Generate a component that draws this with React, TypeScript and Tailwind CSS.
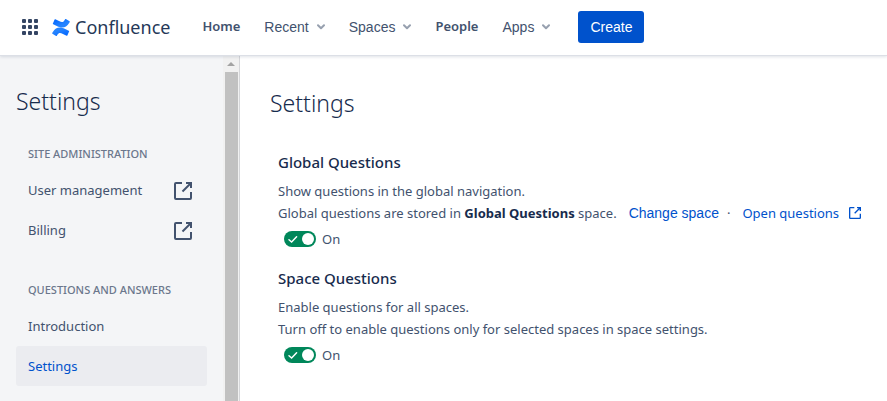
import { useState } from "react";

const sans = "font-['Noto_Sans','Open_Sans',sans-serif]";
const arial = "font-['Liberation_Sans',Arial,sans-serif]";

function AppSwitcherIcon() {
  return (
    <svg viewBox="0 0 16 16" className="size-4" fill="currentColor" aria-hidden="true">
      {[0, 6, 12].map((y) =>
        [0, 6, 12].map((x) => <rect key={`${x}-${y}`} x={x} y={y} width="4" height="4" rx="1" />),
      )}
    </svg>
  );
}

function ConfluenceMark() {
  return (
    <svg viewBox="0 0 256 246" className="h-[17px] w-[18px]" aria-hidden="true">
      <defs>
        <linearGradient id="lower" x1="99%" y1="113%" x2="34%" y2="38%">
          <stop offset="18%" stopColor="#0065FF" />
          <stop offset="100%" stopColor="#2684FF" />
        </linearGradient>
        <linearGradient id="upper" x1="1%" y1="-13%" x2="66%" y2="61%">
          <stop offset="18%" stopColor="#0065FF" />
          <stop offset="100%" stopColor="#2684FF" />
        </linearGradient>
      </defs>
      <path
        fill="url(#lower)"
        d="M9.3 187.9c-2.7 4.3-5.6 9.3-8.1 13.3a8.1 8.1 0 0 0 2.7 11l53 32.700a8.100 8.100 0 0 0 11.300-2.700c2.100-3.600 4.900-8.200 7.900-13.200 21-34.600 42.100-30.400 80.100-12.200l52.600 25a8.100 8.100 0 0 0 10.900-4.100l25.300-57.100a8.100 8.100 0 0 0-4.100-10.600c-11.100-5.200-33.200-15.600-53.100-25.200C116.200 110.100 55.500 112.800 9.300 187.900z"
      />
      <path
        fill="url(#upper)"
        d="M246.100 58.200c2.700-4.300 5.600-9.300 8.100-13.300a8.100 8.100 0 0 0-2.700-11L198.500 1.200a8.100 8.100 0 0 0-11.500 2.700c-2.100 3.600-4.900 8.200-7.900 13.200-21 34.600-42.100 30.400-80.100 12.200L46.600 4.400a8.100 8.100 0 0 0-10.900 4.100L10.400 65.700a8.100 8.100 0 0 0 4.100 10.600c11.100 5.200 33.200 15.600 53.100 25.200 71.700 34.700 132.400 31.900 178.500-43.300z"
      />
    </svg>
  );
}

function ChevronIcon() {
  return (
    <svg viewBox="0 0 8 6" className="h-[6px] w-2 text-[#97A0AF]" fill="none" stroke="currentColor" strokeWidth="2" strokeLinecap="round" strokeLinejoin="round" aria-hidden="true">
      <path d="M1 1.200 4 4.200 7 1.200" />
    </svg>
  );
}

function ShortcutIcon({ className }: { className: string }) {
  return (
    <svg viewBox="0 0 18 18" className={className} fill="none" stroke="currentColor" strokeWidth="2" aria-hidden="true">
      <path d="M8 1H2a1 1 0 0 0-1 1v14a1 1 0 0 0 1 1h14a1 1 0 0 0 1-1v-6" />
      <path d="M8.500 9.500 16 2" />
      <path d="M12 1h5v5" />
      <path d="M14 1h3v3z" fill="currentColor" strokeWidth="1" />
    </svg>
  );
}

function NavMenu({ label }: { label: string }) {
  return (
    <button type="button" className={`flex items-center gap-2 text-sm text-[#42526E] ${arial}`}>
      {label}
      <ChevronIcon />
    </button>
  );
}

function SideLink({ label, external, active }: { label: string; external?: boolean; active?: boolean }) {
  return (
    <a
      href="#"
      aria-current={active ? "page" : undefined}
      className={`flex h-10 items-center justify-between rounded-[3px] pt-px pr-[15px] pl-3 text-[13px] ${active ? "bg-[#EBECF0] text-[#0052CC]" : "text-[#42526E]"}`}
    >
      {label}
      {external && <ShortcutIcon className="size-[18px]" />}
    </a>
  );
}

function Toggle({ id }: { id: string }) {
  const [on, setOn] = useState(true);
  return (
    <label htmlFor={id} className="mt-[6px] ml-[6px] flex h-[18px] w-fit items-center gap-[6px]">
      <input id={id} type="checkbox" role="switch" checked={on} onChange={() => setOn(!on)} className="peer sr-only" />
      <span className={`flex h-4 w-8 items-center rounded-full px-[2px] ${on ? "justify-between bg-[#00875A]" : "bg-[#6B778C]"}`}>
        {on && (
          <svg viewBox="0 0 12 12" className="ml-px size-3 text-white" fill="none" stroke="currentColor" strokeWidth="1.500" strokeLinecap="round" aria-hidden="true">
            <path d="M2 6.800 4.600 9 9.600 3.800" />
          </svg>
        )}
        <span className="size-3 rounded-full bg-white" />
      </span>
      {on ? "On" : "Off"}
    </label>
  );
}

export default function App() {
  return (
    <div className={`flex min-h-screen flex-col bg-white text-[13px] text-[#172B4D] ${sans}`}>
      <header className="z-10 flex h-14 items-center border-b border-[#DCDFE6] bg-white pb-px pl-[22px] shadow-[0_1px_3px_rgba(9,30,66,0.13)]">
        <button type="button" aria-label="Switch to" className="text-[#344563]">
          <AppSwitcherIcon />
        </button>
        <a href="#" className="ml-[14px] flex items-center gap-[5px] text-lg leading-6 text-[#253858]">
          <ConfluenceMark />
          Confluence
        </a>
        <nav className="ml-8 flex items-center gap-6">
          <a href="#" className="text-[13px] font-semibold text-[#42526E]">Home</a>
          <NavMenu label="Recent" />
          <NavMenu label="Spaces" />
          <a href="#" className="text-[13px] font-semibold text-[#42526E]">People</a>
          <NavMenu label="Apps" />
        </nav>
        <button type="button" className={`ml-7 h-8 rounded-[3px] bg-[#0052CC] px-3 text-sm text-white ${arial}`}>
          Create
        </button>
      </header>

      <div className="flex flex-1">
        <aside className="flex w-60 shrink-0 bg-[#F4F5F7]">
          <nav className="flex-1 px-4 pt-[31px] pb-[15px]">
            <h2 className="text-[23px] leading-7 font-light text-[#172B4D]">Settings</h2>
            <h3 className="mt-[31px] mb-2 pl-3 text-[11px] leading-4 font-medium text-[#6B778C]">SITE ADMINISTRATION</h3>
            <SideLink label="User management" external />
            <SideLink label="Billing" external />
            <h3 className="mt-8 mb-2 pl-3 text-[11px] leading-4 font-medium text-[#6B778C]">QUESTIONS AND ANSWERS</h3>
            <SideLink label="Introduction" />
            <SideLink label="Settings" active />
          </nav>
          <div className="flex w-[17px] flex-col items-center border-r border-[#D5D6D9] bg-[#F1F1F1]" aria-hidden="true">
            <svg viewBox="0 0 16 16" className="size-4 shrink-0" fill="#A3A3A3">
              <path d="M4 10 8 6l4 4z" />
            </svg>
            <div className="w-[13px] flex-1 bg-[#C1C1C1]" />
          </div>
        </aside>

        <main className="min-w-0 flex-1 pt-[33px] pl-[30px]">
          <h1 className="text-[23px] leading-7 font-light">Settings</h1>
          <div className="flex flex-col gap-5 pt-[35px] pl-2 leading-[22px] text-[#42526E]">
            <section>
              <h2 className="mb-2 text-[15px] leading-5 font-medium text-[#172B4D]">Global Questions</h2>
              <p>Show questions in the global navigation.</p>
              <p className="flex flex-wrap items-center">
                <span>
                  Global questions are stored in <strong className="font-bold text-[#172B4D]">Global Questions</strong> space.
                </span>
                <a href="#" className={`ml-3 text-sm leading-[22px] text-[#0052CC] ${arial}`}>Change space</a>
                <span className="mx-2">·</span>
                <a href="#" className="ml-1 flex items-center gap-[10px] text-[#0052CC]">
                  Open questions
                  <ShortcutIcon className="size-3" />
                </a>
              </p>
              <Toggle id="global-questions" />
            </section>
            <section>
              <h2 className="mb-2 text-[15px] leading-5 font-medium text-[#172B4D]">Space Questions</h2>
              <p>Enable questions for all spaces.</p>
              <p>Turn off to enable questions only for selected spaces in space settings.</p>
              <Toggle id="space-questions" />
            </section>
          </div>
        </main>
      </div>
    </div>
  );
}
